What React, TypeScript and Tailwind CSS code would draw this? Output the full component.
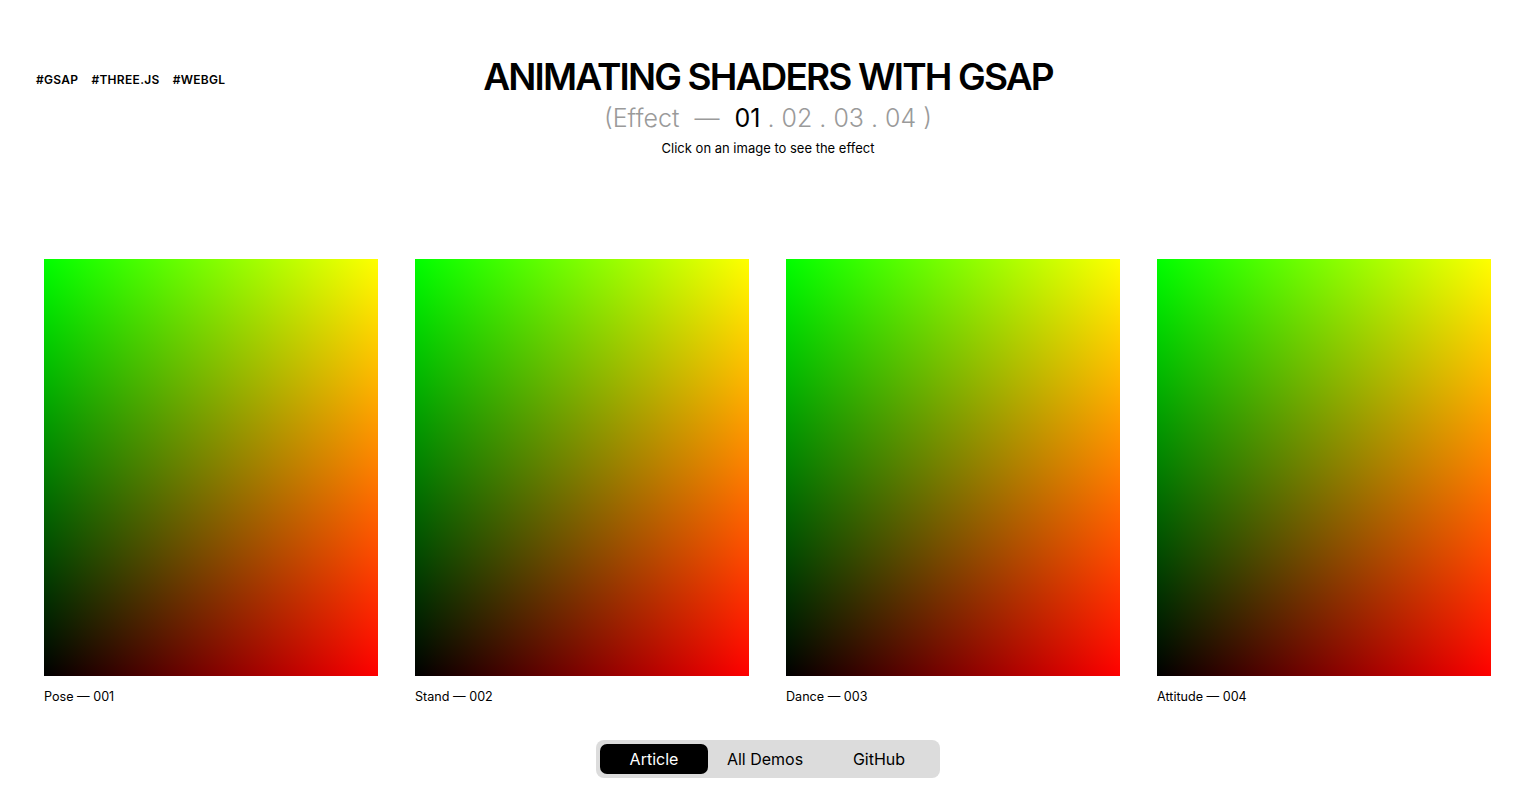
const items = [
  { name: 'Pose', num: '001' },
  { name: 'Stand', num: '002' },
  { name: 'Dance', num: '003' },
  { name: 'Attitude', num: '004' },
]

export default function App() {
  return (
    <div className="relative min-h-[791px] w-full bg-white font-['Inter',sans-serif] text-black">
      <div className="absolute left-[36px] top-[71px] flex gap-[13px] text-[12px] font-semibold tracking-[0.025em]">
        <span>#GSAP</span>
        <span>#THREE.JS</span>
        <span>#WEBGL</span>
      </div>

      <header className="flex flex-col items-center pt-[54px]">
        <h1 className="text-[37px] font-semibold leading-[46px] tracking-[-0.05em]">
          ANIMATING SHADERS WITH GSAP
        </h1>
        <div className="mt-[3px] text-[25px] font-light leading-[30px] text-[#9a9a9a]">
          (Effect <span className="mx-[8px]">—</span>{' '}
          <span className="font-normal text-black">01</span> . 02 . 03 . 04 )
        </div>
        <p className="mt-[7px] text-[13px] leading-[16px]">Click on an image to see the effect</p>
      </header>

      <main className="mt-[103px] flex gap-[37px] pl-[44px] pr-[45px]">
        {items.map((it) => (
          <div key={it.num} className="flex w-[334px] flex-col">
            <div className="h-[417px] w-full bg-[linear-gradient(to_right,#000,#f00),linear-gradient(to_bottom,#0f0,#000)] bg-blend-screen" />
            <span className="mt-[13px] text-[12.6px] leading-[16px]">
              {it.name} — {it.num}
            </span>
          </div>
        ))}
      </main>

      <nav className="mt-[35px] flex justify-center">
        <div className="flex items-center gap-[2px] rounded-[8px] bg-[#dcdcdc] p-[4px] text-[16px]">
          <a className="flex h-[30px] w-[108px] items-center justify-center rounded-[7px] bg-black text-white">
            Article
          </a>
          <a className="flex h-[30px] w-[110px] items-center justify-center">All Demos</a>
          <a className="flex h-[30px] w-[114px] items-center justify-center">GitHub</a>
        </div>
      </nav>
    </div>
  )
}
